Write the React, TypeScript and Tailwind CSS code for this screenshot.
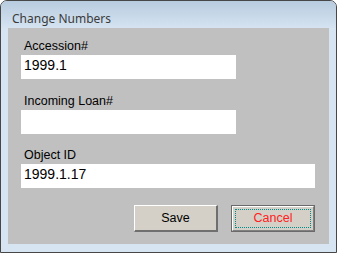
export default function App() {
  const Field = ({ label, value, wide = false, gap }: { label: string; value: string; wide?: boolean; gap: string }) => (
    <div className={`flex flex-col ${gap}`}>
      <div className="h-[16px] mb-[1px] pl-[3px] text-[12.5px] leading-[16px] text-black">{label}</div>
      <div
        className={`h-[24px] ${wide ? 'w-[294px]' : 'w-[215px]'} bg-white pl-[3px] pt-[2px] text-[14px] leading-[17px] text-black`}
      >
        {value}
      </div>
    </div>
  );

  return (
    <div
      className="w-[337px] h-[253px] flex flex-col border border-[#474747] rounded-t-[7px] overflow-hidden bg-[#d7e4f2]"
      style={{ fontFamily: '"Liberation Sans", Arial, sans-serif' }}
    >
      {/* Title bar */}
      <div className="h-[27px] shrink-0 bg-gradient-to-b from-[#b8ccdf] to-[#d5e3f1] pl-[11px] pt-[5px]">
        <span className="text-[12px] leading-[16px] text-[#3a3a3a]" style={{ fontFamily: '"Noto Sans", "Open Sans", sans-serif' }}>
          Change Numbers
        </span>
      </div>

      {/* Client area */}
      <div className="flex-1 px-[7px] pb-[8px]">
        <div className="h-full bg-[#c0c0c0] pl-[13px] pt-[10px] flex flex-col">
          <Field label="Accession#" value="1999.1" gap="" />
          <Field label="Incoming Loan#" value="" gap="mt-[14px]" />
          <Field label="Object ID" value="1999.1.17" wide gap="mt-[13px]" />

          <div className="mt-[17px] flex gap-[13px] pl-[113px]">
            <button
              type="button"
              className="w-[84px] h-[27px] bg-[#d4d0c8] border-t border-l border-t-white border-l-white border-r-2 border-b-2 border-r-[#6f6f6f] border-b-[#6f6f6f] text-[12.5px] text-black"
            >
              Save
            </button>
            <button
              type="button"
              className="w-[84px] h-[27px] border border-[#6a6a6a] bg-[#d4d0c8] p-0"
            >
              <div className="h-full border-t border-l border-t-white border-l-white border-r border-b border-r-[#808080] border-b-[#808080] p-[2px]">
                <div className="h-full border border-dotted border-[#008b8b] flex items-center justify-center text-[12.5px] text-[#ff2020]">
                  Cancel
                </div>
              </div>
            </button>
          </div>
        </div>
      </div>
    </div>
  );
}
